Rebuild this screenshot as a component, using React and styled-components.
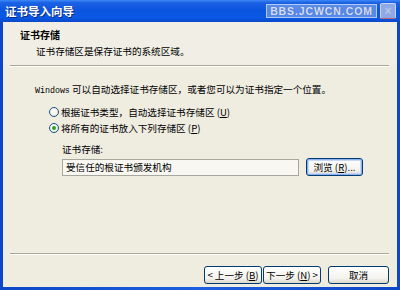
import styled, { createGlobalStyle } from "styled-components";

const GlobalStyle = createGlobalStyle`
  html, body {
    margin: 0;
    padding: 0;
    background: #ffffff;
  }
  body {
    font-family: "Noto Sans CJK SC", "Liberation Sans", sans-serif;
  }
`;

const cjk = `"Noto Sans CJK SC", "Liberation Sans", sans-serif`;

const Frame = styled.div`
  width: 400px;
  height: 290px;
  display: flex;
  flex-direction: column;
  background: linear-gradient(90deg, #0b47c8 0%, #1d5fe0 50%, #0b47c8 100%);
  overflow: hidden;
`;

const TitleBar = styled.div`
  height: 22px;
  flex: none;
  display: flex;
  align-items: center;
  padding: 0 4px 0 5px;
  background: linear-gradient(
    180deg,
    #3d8af7 0%,
    #1c62e4 12%,
    #0b55df 45%,
    #0a58e6 80%,
    #0a48c8 100%
  );
`;

const Title = styled.div`
  flex: 1;
  color: #ffffff;
  font-family: ${cjk};
  font-weight: 700;
  font-size: 11.5px;
  line-height: 14px;
  text-shadow: 1px 1px 0 #0a2a80;
`;

const Watermark = styled.div`
  height: 12px;
  width: 109px;
  margin-right: 3px;
  display: flex;
  align-items: center;
  justify-content: center;
  background: rgba(150, 180, 240, 0.55);
  border: 1px solid rgba(200, 215, 245, 0.8);
  color: #d4def4;
  font-family: "Liberation Sans", sans-serif;
  font-weight: 700;
  font-size: 10.5px;
  letter-spacing: 0.9px;
  line-height: 12px;
  text-shadow: 0 0 1px #4a64a8;
`;

const CloseBox = styled.div`
  width: 14px;
  height: 14px;
  display: flex;
  align-items: center;
  justify-content: center;
  background: #8fa8e6;
  border: 1px solid #c8d6f4;
  border-bottom-color: #c06070;
  border-radius: 2px;
  color: #b7c6e8;
  font-family: "Liberation Sans", sans-serif;
  font-weight: 700;
  font-size: 12px;
  line-height: 12px;
`;

const Client = styled.div`
  flex: 1;
  margin: 0 3px 3px 3px;
  background: #efece0;
  display: flex;
  flex-direction: column;
  font-family: ${cjk};
  font-size: 9.6px;
  color: #000000;
`;

const Header = styled.div`
  height: 43px;
  flex: none;
  box-sizing: border-box;
  padding: 6px 0 0 17px;
  background: #f1efe5;
`;

const HeaderTitle = styled.div`
  font-weight: 700;
  font-size: 10px;
  line-height: 14px;
`;

const HeaderText = styled.div`
  margin-left: 16px;
  margin-top: 2px;
  line-height: 14px;
`;

const Separator = styled.div`
  flex: none;
  height: 0;
  margin: 0 8px 0 7px;
  border-top: 1px solid #aca899;
  border-bottom: 1px solid #ffffff;
`;

const Body = styled.div`
  flex: 1;
  padding: 15px 0 0 32px;
  display: flex;
  flex-direction: column;
`;

const Line = styled.div`
  line-height: 14px;
  white-space: nowrap;
`;

const Latin = styled.span`
  font-family: "Liberation Mono", monospace;
  font-size: 8.3px;
`;

const RadioRow = styled.label`
  display: flex;
  align-items: center;
  height: 14px;
  margin-left: 14px;
  margin-top: ${(p) => p.$gap}px;
  white-space: nowrap;
`;

const RadioDot = styled.span`
  width: 10px;
  height: 10px;
  box-sizing: border-box;
  margin-right: 2px;
  border-radius: 50%;
  border: 1px solid #1c5180;
  background: radial-gradient(circle at 35% 35%, #ffffff 0%, #e8e6da 100%);
  display: flex;
  align-items: center;
  justify-content: center;

  &::after {
    content: "";
    width: 4px;
    height: 4px;
    border-radius: 50%;
    background: ${(p) => (p.$checked ? "#2aa52a" : "transparent")};
  }
`;

const U = styled.span`
  text-decoration: underline;
`;

const Store = styled.div`
  margin: 7px 0 0 27px;
  display: flex;
  flex-direction: column;
`;

const StoreRow = styled.div`
  display: flex;
  align-items: center;
  gap: 7px;
  margin-top: 2px;
`;

const StoreField = styled.div`
  width: 237px;
  height: 17px;
  box-sizing: border-box;
  border: 1px solid #a6a89e;
  background: #f8f7f2;
  padding-left: 3px;
  line-height: 15px;
`;

const Button = styled.button`
  height: 18px;
  width: ${(p) => p.$w}px;
  padding: 0;
  box-sizing: border-box;
  border: 1px solid #003c74;
  border-radius: 3px;
  background: linear-gradient(180deg, #ffffff 0%, #f4f3ee 70%, #dcd8c8 100%);
  box-shadow: ${(p) =>
    p.$focus ? "inset 0 0 0 1px #8cb0f0, inset 0 0 0 2px #c8d8f8" : "none"};
  font-family: ${cjk};
  font-size: 9.6px;
  line-height: 16px;
  color: #000000;
  white-space: nowrap;
`;

const Footer = styled.div`
  flex: none;
  display: flex;
  flex-direction: column;
`;

const ButtonRow = styled.div`
  display: flex;
  justify-content: flex-end;
  align-items: center;
  margin: 11px 8px 3px 0;
`;

const WizardPair = styled.div`
  display: flex;
  gap: 1px;
  margin-right: 7px;
`;

export default function App() {
  return (
    <>
      <GlobalStyle />
      <Frame>
        <TitleBar>
          <Title>证书导入向导</Title>
          <Watermark>BBS.JCWCN.COM</Watermark>
          <CloseBox>×</CloseBox>
        </TitleBar>
        <Client>
          <Header>
            <HeaderTitle>证书存储</HeaderTitle>
            <HeaderText>证书存储区是保存证书的系统区域。</HeaderText>
          </Header>
          <Separator />
          <Body>
            <Line>
              <Latin>Windows</Latin> 可以自动选择证书存储区，或者您可以为证书指定一个位置。
            </Line>
            <RadioRow $gap={7}>
              <RadioDot />
              根据证书类型，自动选择证书存储区 (<U>U</U>)
            </RadioRow>
            <RadioRow $gap={2}>
              <RadioDot $checked />
              将所有的证书放入下列存储区 (<U>P</U>)
            </RadioRow>
            <Store>
              <Line>证书存储:</Line>
              <StoreRow>
                <StoreField>受信任的根证书颁发机构</StoreField>
                <Button $w={57} $focus>
                  浏览 (<U>R</U>)...
                </Button>
              </StoreRow>
            </Store>
          </Body>
          <Footer>
            <Separator />
            <ButtonRow>
              <WizardPair>
                <Button $w={58}>
                  &lt; 上一步 (<U>B</U>)
                </Button>
                <Button $w={58}>
                  下一步 (<U>N</U>) &gt;
                </Button>
              </WizardPair>
              <Button $w={61}>取消</Button>
            </ButtonRow>
          </Footer>
        </Client>
      </Frame>
    </>
  );
}
